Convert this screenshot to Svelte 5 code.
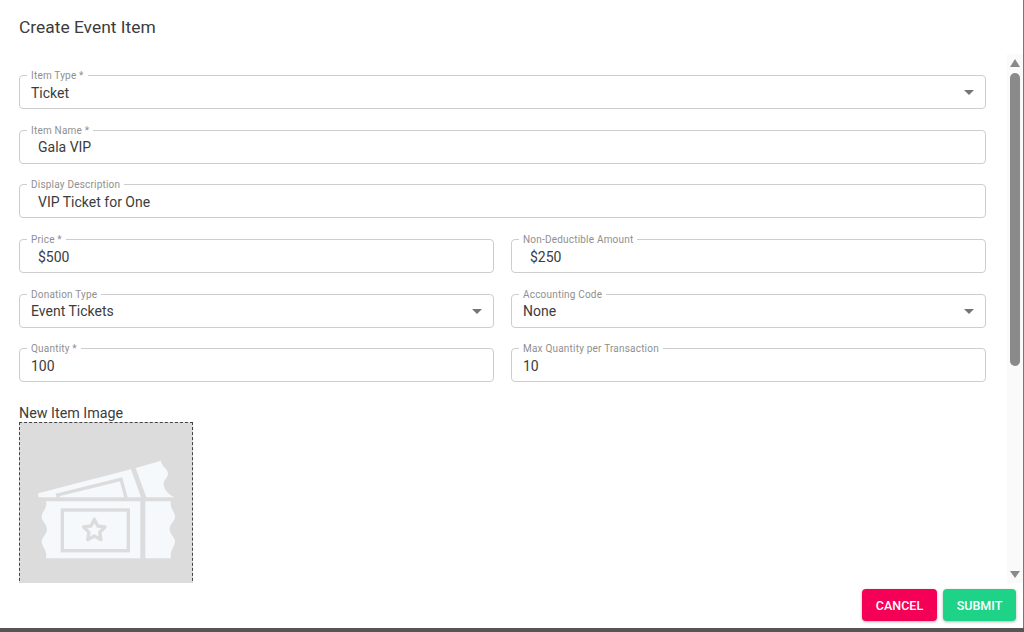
<script lang="ts">
	type Field = { label: string; value: string; select?: boolean; inset?: boolean };

	const rows: Field[][] = [
		[{ label: 'Item Type *', value: 'Ticket', select: true }],
		[{ label: 'Item Name *', value: 'Gala VIP', inset: true }],
		[{ label: 'Display Description', value: 'VIP Ticket for One', inset: true }],
		[
			{ label: 'Price *', value: '$500', inset: true },
			{ label: 'Non-Deductible Amount', value: '$250', inset: true }
		],
		[
			{ label: 'Donation Type', value: 'Event Tickets', select: true },
			{ label: 'Accounting Code', value: 'None', select: true }
		],
		[
			{ label: 'Quantity *', value: '100' },
			{ label: 'Max Quantity per Transaction', value: '10' }
		]
	];
</script>

<div class="dialog">
	<h2>Create Event Item</h2>

	<div class="body">
		<div class="content">
			<div class="fields">
				{#each rows as row}
					<div class="row">
						{#each row as field}
							<div class="field">
								<span class="label">{field.label}</span>
								<span class="value" class:inset={field.inset}>{field.value}</span>
								{#if field.select}
									<span class="caret"></span>
								{/if}
							</div>
						{/each}
					</div>
				{/each}
			</div>

			<p class="image-title">New Item Image</p>
			<div class="image-box">
				<svg viewBox="0 0 510 390" width="170" height="130" aria-hidden="true">
					<path
						class="paper"
						d="M52 160 L330 88 L360 172 L52 172 Z M344 84 L420 62 C420 80 441 85 441 100 C441 115 428 118 428 132 C428 150 445 165 460 172 L376 172 Z"
					/>
					<path class="cut" d="M112 172 L110 165 L300 118 L316 176" />
					<path
						class="paper"
						d="M75 184 L358 184 L358 355 L75 355 C80 330 62 320 62 305 C62 290 78 285 78 267 C78 250 62 245 62 230 C62 215 80 205 75 184 Z M373 184 L450 184 C445 205 462 215 462 230 C462 245 446 250 446 267 C446 285 462 290 462 305 C462 320 445 330 450 355 L373 355 Z"
					/>
					<rect class="cut" x="124" y="210" width="198" height="122" />
					<path
						class="cut star"
						d="M220 238 L230 258 L252 261 L236 277 L240 299 L220 288 L200 299 L204 277 L188 261 L210 258 Z"
					/>
				</svg>
			</div>
		</div>

		<div class="scrollbar">
			<span class="arrow up"></span>
			<span class="thumb"></span>
			<span class="arrow down"></span>
		</div>
	</div>

	<div class="actions">
		<button class="cancel">CANCEL</button>
		<button class="submit">SUBMIT</button>
	</div>
</div>

<style>
	:global(body) {
		background: #555;
	}

	.dialog {
		display: flex;
		flex-direction: column;
		box-sizing: border-box;
		height: 628px;
		background: #fff;
		border-right: 1px solid #777;
		color: #3c3c3c;
		font-family: Roboto, 'Liberation Sans', sans-serif;
	}

	h2 {
		margin: 0;
		padding: 17px 19px 0;
		height: 37px;
		font-size: 17.4px;
		line-height: 20px;
		font-weight: 400;
	}

	.body {
		display: flex;
		height: 529px;
		overflow: hidden;
	}

	.content {
		flex: 1;
		padding: 21px 21px 0 19px;
		min-width: 0;
	}

	.fields {
		display: flex;
		flex-direction: column;
		gap: 20.7px;
	}

	.row {
		display: flex;
		gap: 17px;
	}

	.field {
		position: relative;
		flex: 1;
		display: flex;
		align-items: center;
		box-sizing: border-box;
		height: 34px;
		padding: 0 11px;
		border: 1px solid #cdcdcd;
		border-radius: 4px;
	}

	.label {
		position: absolute;
		top: -6px;
		left: 7px;
		padding: 0 4px;
		background: #fff;
		color: #8f8f8f;
		font-size: 10px;
		line-height: 11px;
		letter-spacing: 0.2px;
	}

	.value {
		font-size: 14px;
		line-height: 18px;
		margin-top: 1px;
	}

	.inset {
		padding-left: 7px;
	}

	.caret {
		position: absolute;
		right: 11px;
		top: 14px;
		border-left: 5px solid transparent;
		border-right: 5px solid transparent;
		border-top: 5px solid #757575;
	}

	.image-title {
		margin: 22px 0 0;
		font-size: 14.3px;
		line-height: 18px;
	}

	.image-box {
		box-sizing: border-box;
		width: 174px;
		height: 174px;
		padding: 17px 0 0 1px;
		background: #dcdcdc;
		border: 1px dashed #444;
	}

	svg {
		display: block;
	}

	.paper {
		fill: #f5f9fc;
	}

	.cut {
		fill: none;
		stroke: #dcdcdc;
		stroke-width: 10;
	}

	.star {
		stroke-linejoin: round;
	}

	.scrollbar {
		flex: none;
		display: flex;
		flex-direction: column;
		align-items: center;
		width: 16px;
		background: #fafafa;
	}

	.arrow {
		flex: none;
		border-left: 5px solid transparent;
		border-right: 5px solid transparent;
	}

	.up {
		margin-top: 5px;
		border-bottom: 8px solid #8a8a8a;
	}

	.thumb {
		width: 10px;
		height: 293px;
		margin-top: 6px;
		border-radius: 5px;
		background: #8a8a8a;
	}

	.down {
		margin-top: auto;
		margin-bottom: 5px;
		border-top: 7px solid #8a8a8a;
	}

	.actions {
		display: flex;
		justify-content: flex-end;
		gap: 6px;
		padding: 6px 7px 0 0;
	}

	button {
		height: 32px;
		border: 0;
		border-radius: 4px;
		color: #fff;
		font-family: inherit;
		font-size: 12.5px;
		font-weight: 500;
		box-shadow: 0 1px 3px rgba(0, 0, 0, 0.3);
	}

	.cancel {
		width: 75px;
		background: #f50057;
	}

	.submit {
		width: 73px;
		background: #1ed388;
	}
</style>
